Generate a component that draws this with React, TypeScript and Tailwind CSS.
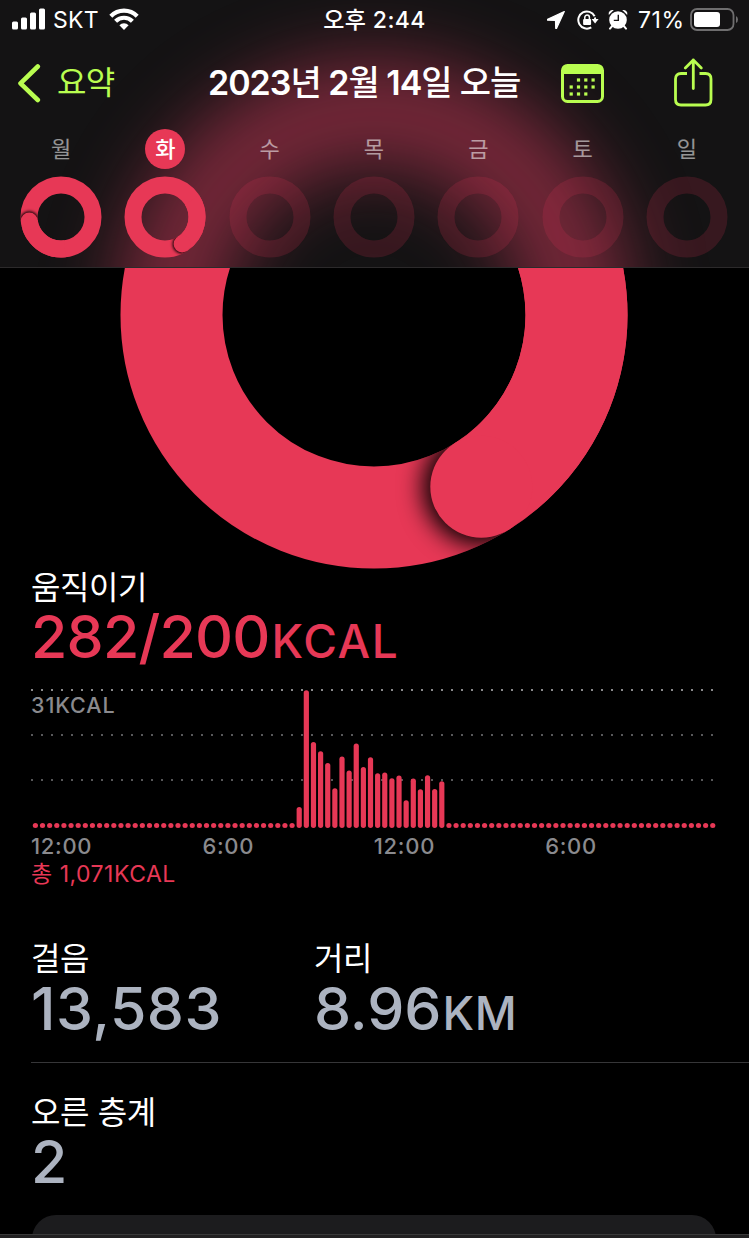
const MOVE = '#e73856'

const DAYS = [
  { label: '월', angle: 263 },
  { label: '화', angle: 147.6, today: true },
  { label: '수' },
  { label: '목' },
  { label: '금' },
  { label: '토' },
  { label: '일' },
]

// quarter-hour buckets, everything outside of this range is empty
const FIRST_BUCKET = 37
const BUCKETS = [
  21, 137.7, 86, 76.7, 65, 39.7, 71.3, 57.3, 84.3, 61, 70.7, 54.7, 55.3, 49.7, 52.3, 27.7, 49.3, 38.7, 52.7, 39, 46.7,
]

const HOURS = ['12:00', '6:00', '12:00', '6:00']

type RingProps = { id: string; cx: number; cy: number; r: number; width: number; angle: number; blur: number }

function Ring({ id, cx, cy, r, width, angle, blur }: RingProps) {
  const point = (deg: number) => {
    const a = (deg * Math.PI) / 180
    return [cx + r * Math.sin(a), cy - r * Math.cos(a)]
  }
  const [sx, sy] = point(angle - 90)
  const [ex, ey] = point(angle)
  return (
    <g>
      <defs>
        <filter id={`${id}-blur`} x="-100%" y="-100%" width="300%" height="300%">
          <feGaussianBlur stdDeviation={blur} />
        </filter>
        <mask id={`${id}-mask`} maskUnits="userSpaceOnUse" x={cx - r * 2} y={cy - r * 2} width={r * 4} height={r * 4}>
          <circle cx={cx} cy={cy} r={r} fill="none" stroke="#fff" strokeWidth={width} />
        </mask>
      </defs>
      <circle cx={cx} cy={cy} r={r} fill="none" stroke={MOVE} strokeWidth={width} />
      <g mask={`url(#${id}-mask)`}>
        <circle cx={ex} cy={ey} r={width / 2 + blur * 0.6} fill="#000" filter={`url(#${id}-blur)`} />
      </g>
      <path d={`M${sx} ${sy}A${r} ${r} 0 0 1 ${ex} ${ey}`} fill="none" stroke={MOVE} strokeWidth={width} />
      <circle cx={ex} cy={ey} r={width / 2} fill={MOVE} />
    </g>
  )
}

function StatusBar() {
  return (
    <div className="grid grid-cols-3 h-[39px] items-center text-[23px] text-white">
      <div className="flex items-center pl-3">
        <svg className="-mt-0.5" width="33" height="22" viewBox="0 0 33 22" fill="#fff">
          <rect x="0" y="13.5" width="6" height="8" rx="1.5" />
          <rect x="9" y="9.5" width="6" height="12" rx="1.5" />
          <rect x="18" y="4.5" width="6" height="17" rx="1.5" />
          <rect x="27" y="0.5" width="6" height="21" rx="1.5" />
        </svg>
        <span className="w-[45px] ml-2 leading-[40px] tracking-[0.3px]">SKT</span>
        <svg className="ml-[11px] -mt-0.5" width="30" height="22" viewBox="0 0 30 22" fill="none" stroke="#fff" strokeWidth="4.2">
          <path d="M1.8 8.2a18.6 18.6 0 0 1 26.4 0" />
          <path d="M6.6 13.2a11.9 11.9 0 0 1 16.8 0" />
          <path d="M15 22l-4.6-4.8a6.6 6.6 0 0 1 9.2 0z" fill="#fff" stroke="none" />
        </svg>
      </div>
      <span className="text-center font-medium tracking-[0.4px] leading-[40px]">오후 2:44</span>
      <div className="flex items-center justify-end pr-[11px]">
        <svg width="18" height="18" viewBox="0 0 18 18" fill="#fff">
          <path d="M17.3 0.6L0.6 8.3q-.8.6.3.9l7.6.2.2 7.7q.2 1 .9.2z" stroke="#fff" strokeWidth="1.2" strokeLinejoin="round" />
        </svg>
        <svg className="ml-3" width="22" height="20" viewBox="0 0 22 20">
          <path d="M17.6 6.2A8.6 8.6 0 1 0 14.3 17.4M17.9 7.5a8.6 8.6 0 0 1 .2 2.2" fill="none" stroke="#fff" strokeWidth="2" />
          <path d="M14.6 9h7l-3.5 4.6z" fill="#fff" />
          <rect x="6.1" y="9" width="8" height="6" rx="1" fill="#fff" />
          <path d="M7.8 9V7.3a2.3 2.3 0 0 1 4.6 0V9" fill="none" stroke="#fff" strokeWidth="1.5" />
        </svg>
        <svg className="ml-[9px] -mt-0.5" width="20" height="21" viewBox="0 0 20 21">
          <circle cx="10" cy="11" r="8.8" fill="#fff" />
          <path d="M0.800 6.1A4 4 0 0 1 5.8 1.1zM19.200 6.1a4 4 0 0 0-5-5z" fill="#fff" />
          <path d="M4.2 17l-2.2 2.6M15.8 17l2.2 2.6" stroke="#fff" strokeWidth="2" strokeLinecap="round" />
          <path d="M10.3 5.8v5.6H5.8" fill="none" stroke="#171415" strokeWidth="1.4" />
        </svg>
        <span className="w-[46px] ml-[10px] leading-[40px] tracking-[0.6px]">71%</span>
        <svg className="ml-[6px] -mt-0.5" width="48" height="23" viewBox="0 0 48 23">
          <rect x="1" y="1" width="42.5" height="21" rx="6" fill="none" stroke="#6f6e6f" strokeWidth="1.8" />
          <rect x="4" y="4" width="26" height="15" rx="3" fill="#fff" />
          <path d="M46 8v7q2-1 2-3.500T46 8z" fill="#6f6e6f" />
        </svg>
      </div>
    </div>
  )
}

function NavBar() {
  return (
    <div className="flex items-center h-[87px]">
      <div className="flex items-center w-[208px] pl-[17px] text-[#b9fd50]">
        <svg width="24" height="40" viewBox="0 0 24 40" fill="none" stroke="currentColor" strokeWidth="4.600" strokeLinecap="round" strokeLinejoin="round">
          <path d="M20.800 3.500L3.500 20.300L20.800 37" />
        </svg>
        <span className="ml-4 text-[32px] leading-[40px] tracking-[-0.6px]">요약</span>
      </div>
      <h1 className="w-[353px] text-[34px] leading-[40px] font-semibold tracking-[-1px] text-white whitespace-nowrap">
        2023<span className="font-medium">년</span> 2<span className="font-medium">월</span> 14
        <span className="font-medium">일 오늘</span>
      </h1>
      <svg className="mt-0.5" width="43" height="39" viewBox="0 0 43 39" fill="#b9fd50">
        <rect x="1.500" y="1.500" width="40" height="36" rx="5" fill="none" stroke="#b9fd50" strokeWidth="3" />
        <path d="M1 10V5q0-4 4-4h33q4 0 4 4v5z" />
        {[17.500, 24.800, 32.100].map((x) => <rect key={x} x={x - 1.600} y="14.400" width="3.200" height="3.200" />)}
        {[10.200, 17.500, 24.800, 32.100].map((x) => <rect key={x} x={x - 1.600} y="21.400" width="3.200" height="3.200" />)}
        {[10.200, 17.500, 24.800].map((x) => <rect key={x} x={x - 1.600} y="28.400" width="3.200" height="3.200" />)}
      </svg>
      <svg className="ml-[70px] text-[#b9fd50]" width="40" height="50" viewBox="0 0 40 50" fill="none" stroke="currentColor" strokeWidth="2.800" strokeLinecap="round" strokeLinejoin="round">
        <path d="M13 15.500H7q-5.500 0-5.500 5.500V41.500q0 5.500 5.500 5.500h24.500q5.500 0 5.500-5.500V21Q37 15.500 31.500 15.500h-6" strokeLinecap="butt" />
        <path d="M19.300 30.500V2M11.300 10l8-8 8 8" />
      </svg>
    </div>
  )
}

function WeekStrip() {
  return (
    <div className="grid grid-cols-7 pl-[9px] pr-[10px] pt-[3px]">
      {DAYS.map(({ label, angle, today }) => (
        <div key={label} className="flex flex-col items-center">
          <span
            className={
              today
                ? 'size-10 rounded-full bg-[#e73856] text-center text-[22px] leading-[40px] font-medium text-white'
                : 'size-10 text-center text-[22px] leading-[40px] text-white/55'
            }
          >
            {label}
          </span>
          <svg className="mt-[7px]" width="82" height="82" viewBox="0 0 82 82">
            {angle ? (
              <Ring id={`day-${label}`} cx={41} cy={41} r={32} width={17} angle={angle} blur={1.8} />
            ) : (
              <circle cx="41" cy="41" r="32" fill="none" stroke={MOVE} strokeOpacity="0.17" strokeWidth="17" />
            )}
          </svg>
        </div>
      ))}
    </div>
  )
}

function Header() {
  return (
    <header className="relative shrink-0 h-[268px] overflow-hidden border-b border-[#2c2a2b] bg-[#141314]">
      {/* the big ring showing through the translucent bar */}
      <svg className="absolute inset-0" width="749" height="267" viewBox="0 0 749 267">
        <defs>
          <filter id="glow" filterUnits="userSpaceOnUse" x="-100" y="-100" width="950" height="850" colorInterpolationFilters="sRGB">
            <feGaussianBlur stdDeviation="38" />
          </filter>
        </defs>
        <circle cx="374" cy="315" r="204" fill="none" stroke="#e23d62" strokeOpacity="0.5" strokeWidth="102" filter="url(#glow)" />
      </svg>
      <div className="relative">
        <StatusBar />
        <NavBar />
        <WeekStrip />
      </div>
    </header>
  )
}

function ActivityChart() {
  return (
    <div className="relative mt-[21px]">
      <svg className="block" width="688" height="142" viewBox="31 688 688 142">
        <path d="M31 690H716" stroke="#8a8a8c" strokeWidth="2" strokeDasharray="2 8" />
        <path d="M31 735H716M31 780H716" stroke="#58585a" strokeWidth="2" strokeDasharray="2 8" />
        {Array.from({ length: 96 }, (_, i) => {
          const h = BUCKETS[i - FIRST_BUCKET] ?? 5
          return <rect key={i} x={32.8 + i * 7.13} y={827.9 - h} width="5.200" height={h} rx="2.600" fill={MOVE} />
        })}
      </svg>
      <span className="absolute left-0 top-[3px] text-[21.500px] leading-[28px] font-medium tracking-[0.9px] text-[#8a8a8e]">31KCAL</span>
      <div className="flex mt-0.5">
        {HOURS.map((hour, i) => (
          <span key={i} className="w-[171.400px] text-[22px] leading-[28px] font-medium tracking-[0.7px] text-[#8a8a8e]">
            {hour}
          </span>
        ))}
      </div>
    </div>
  )
}

export default function App() {
  return (
    <div className="flex flex-col w-[749px] h-[1238px] overflow-hidden bg-black font-['Inter','Noto_Sans_CJK_KR',sans-serif]">
      <Header />

      <svg className="block shrink-0 ml-[120px]" width="509" height="301" viewBox="120 268 509 301">
        <Ring id="move" cx={374} cy={315} r={202.5} width={102} angle={148} blur={12} />
      </svg>

      <section className="pl-[31px] text-[#e73856]">
        <h2 className="text-[32px] leading-[38px] tracking-[-0.4px] text-white">움직이기</h2>
        <p className="h-[60px] text-[59px] leading-[60px] font-medium tracking-[-0.8px] whitespace-nowrap">
          282/200<span className="ml-0.5 text-[46px] leading-none tracking-[1.6px]">KCAL</span>
        </p>
        <ActivityChart />
        <p className="text-[23px] leading-[28px] tracking-[0.5px]">총 1,071KCAL</p>
      </section>

      <section className="flex pl-[31px] mt-[52px] text-[#acb3c0]">
        <div className="w-[283px]">
          <h2 className="text-[32px] leading-[38px] tracking-[-0.4px] text-white">걸음</h2>
          <p className="h-[62px] text-[59px] leading-[62px] font-medium tracking-[0.5px]">13,583</p>
        </div>
        <div>
          <h2 className="text-[32px] leading-[38px] tracking-[-0.4px] text-white">거리</h2>
          <p className="h-[62px] text-[59px] leading-[62px] font-medium">
            8.96<span className="ml-px text-[46px] leading-none tracking-[0.6px]">KM</span>
          </p>
        </div>
      </section>

      <section className="ml-[31px] mt-[22px] pt-[31px] border-t border-[#363638]">
        <h2 className="text-[32px] leading-[38px] tracking-[-0.4px] text-white">오른 층계</h2>
        <p className="text-[59px] leading-[60px] font-medium text-[#acb3c0]">2</p>
      </section>

      <div className="shrink-0 mt-[23px] ml-8 w-[684px] h-[19px] overflow-hidden">
        <div className="h-20 rounded-[24px] bg-[#1c1c1e]" />
      </div>
      <footer className="shrink-0 h-1 border-t border-[#3a3a3a] bg-[#222122]" />
    </div>
  )
}
